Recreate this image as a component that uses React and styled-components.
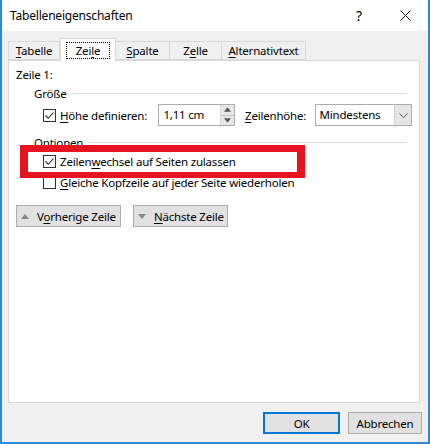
import React from 'react'
import styled, { createGlobalStyle } from 'styled-components'

const GlobalStyle = createGlobalStyle`
    html, body {
        margin: 0;
        padding: 0;
        background: #ffffff;
    }
    body {
        font-family: "Noto Sans", "Open Sans", sans-serif;
        font-size: 11.5px;
        letter-spacing: -0.2px;
        color: #000000;
    }
`
const Window = styled.div`
    width: 430px;
    height: 444px;
    box-sizing: border-box;
    border: 2px solid #2b8ad8;
    border-top: none;
    background: #f0f0f0;
    display: flex;
    flex-direction: column;
`
const TitleBar = styled.div`
    height: 31px;
    flex-shrink: 0;
    background: #ffffff;
    display: flex;
    align-items: center;
    padding-left: 8px;
`
const Caption = styled.div`
    flex: 1;
    font-size: 12px;
`
const CaptionButton = styled.div`
    width: 46px;
    height: 31px;
    display: flex;
    align-items: center;
    justify-content: center;
    font-size: 14px;
`
const Body = styled.div`
    display: flex;
    flex-direction: column;
    padding: 7px 8px 0 6px;
`
const Tabs = styled.div`
    display: flex;
    align-items: flex-end;
    height: 22px;
    position: relative;
    z-index: 1;
`
const Tab = styled.div`
    box-sizing: border-box;
    height: ${props => props.active ? '23px' : '19px'};
    width: ${props => props.width}px;
    margin-bottom: ${props => props.active ? '-1px' : '0'};
    background: ${props => props.active ? '#ffffff' : '#f0f0f0'};
    border: 1px solid #d9d9d9;
    border-bottom: ${props => props.active ? 'none' : '1px solid #d9d9d9'};
    border-left: ${props => props.first || props.active ? '1px solid #d9d9d9' : 'none'};
    display: flex;
    align-items: ${props => props.active ? 'flex-start' : 'center'};
    justify-content: center;
    padding-top: ${props => props.active ? '3px' : '0'};
    white-space: nowrap;
`
const FocusText = styled.span`
    border: 1px dotted #000000;
    padding: 0 9px;
    line-height: 15px;
    box-sizing: border-box;
    height: 17px;
`
const Key = styled.span`
    text-decoration: underline;
    text-underline-offset: 2px;
`
const Panel = styled.div`
    position: relative;
    box-sizing: border-box;
    height: 343px;
    background: #ffffff;
    border: 1px solid #d9d9d9;
    padding: 6px 7px;
`
const Line = styled.div`
    line-height: 16px;
    height: 16px;
`
const GroupHeader = styled.div`
    display: flex;
    align-items: center;
    height: 16px;
    margin: ${props => props.top}px 0 0 18px;
    &::after {
        content: '';
        flex: 1;
        height: 1px;
        background: #dcdcdc;
        margin: 1px 5px 0 6px;
    }
`
const FieldRow = styled.div`
    display: flex;
    align-items: center;
    height: 22px;
    margin: 3px 0 0 27px;
`
const CheckRow = styled.div`
    display: flex;
    align-items: center;
    height: 21px;
    margin: ${props => props.top || 0}px 0 0 27px;
`
const Box = styled.div`
    box-sizing: border-box;
    width: 13px;
    height: 13px;
    border: 1px solid #333333;
    background: #ffffff;
    flex-shrink: 0;
    display: flex;
    align-items: center;
    justify-content: center;
`
const CheckLabel = styled.span`
    margin-left: 4px;
    ${props => props.width ? `width: ${props.width}px;` : ''}
    white-space: nowrap;
`
const FieldLabel = styled.span`
    margin-left: 10px;
    width: 70px;
    white-space: nowrap;
`
const Spin = styled.div`
    box-sizing: border-box;
    width: 77px;
    height: 22px;
    border: 1px solid #abadb3;
    display: flex;
    align-items: stretch;
`
const SpinText = styled.div`
    flex: 1;
    padding-left: 4px;
    line-height: 20px;
`
const SpinButtons = styled.div`
    width: 13px;
    display: flex;
    flex-direction: column;
    border-left: 1px solid #d9d9d9;
    background: #e8e8e8;
`
const SpinHalf = styled.div`
    flex: 1;
    display: flex;
    align-items: center;
    justify-content: center;
    border-bottom: ${props => props.top ? '1px solid #c4c4c4' : 'none'};
`
const Select = styled.div`
    box-sizing: border-box;
    width: 98px;
    height: 22px;
    border: 1px solid #abadb3;
    display: flex;
    align-items: stretch;
`
const SelectText = styled.div`
    flex: 1;
    padding-left: 4px;
    line-height: 20px;
`
const DropButton = styled.div`
    width: 16px;
    background: #e5e5e5;
    border-left: 1px solid #d0d0d0;
    display: flex;
    align-items: center;
    justify-content: center;
`
const NavRow = styled.div`
    display: flex;
    gap: 12px;
    margin-top: 12px;
`
const Button = styled.div`
    box-sizing: border-box;
    height: 22px;
    width: ${props => props.width}px;
    background: #e1e1e1;
    border: ${props => props.primary ? '2px solid #0078d7' : '1px solid #adadad'};
    display: flex;
    align-items: center;
    justify-content: ${props => props.icon ? 'flex-start' : 'center'};
    padding-left: ${props => props.icon ? '4px' : '0'};
    gap: 8px;
    white-space: nowrap;
`
const Highlight = styled.div`
    position: absolute;
    left: 11px;
    top: 84px;
    width: 285px;
    height: 33px;
    box-sizing: border-box;
    border-style: solid;
    border-color: #e5141e;
    border-width: 7px 8px 6px 8px;
    pointer-events: none;
`
const Footer = styled.div`
    display: flex;
    justify-content: flex-end;
    gap: 8px;
    padding: 9px 6px 0 0;
`

const Check = ({ checked }) => (
    <Box>
        {checked && (
            <svg width="11" height="11" viewBox="0 0 11 11">
                <polyline points="1.5,5.5 4.2,8.3 9.6,2.5" fill="none" stroke="#222" strokeWidth="1.1" />
            </svg>
        )}
    </Box>
)

const Arrow = ({ up, size = 7, color = '#888' }) => (
    <svg width={size} height={Math.ceil(size / 2) + 1} viewBox="0 0 8 5">
        <polygon points={up ? '0,5 4,0 8,5' : '0,0 8,0 4,5'} fill={color} />
    </svg>
)

export default function App() {
    return (
        <>
            <GlobalStyle />
            <Window>
                <TitleBar>
                    <Caption>Tabelleneigenschaften</Caption>
                    <CaptionButton>?</CaptionButton>
                    <CaptionButton>
                        <svg width="11" height="11" viewBox="0 0 11 11">
                            <path d="M0.5 0.5 L10.5 10.5 M10.5 0.5 L0.5 10.5" stroke="#111" strokeWidth="1" />
                        </svg>
                    </CaptionButton>
                </TitleBar>
                <Body>
                    <Tabs>
                        <Tab first width={52}><span><Key>T</Key>abelle</span></Tab>
                        <Tab active width={56}><FocusText>Zei<Key>l</Key>e</FocusText></Tab>
                        <Tab width={54}><span><Key>S</Key>palte</span></Tab>
                        <Tab width={52}><span>Z<Key>e</Key>lle</span></Tab>
                        <Tab width={84}><span><Key>A</Key>lternativtext</span></Tab>
                    </Tabs>
                    <Panel>
                        <Line>Zeile 1:</Line>
                        <GroupHeader top={2}>Größe</GroupHeader>
                        <FieldRow>
                            <Check checked />
                            <CheckLabel width={99}><Key>H</Key>öhe definieren:</CheckLabel>
                            <Spin>
                                <SpinText>1,11 cm</SpinText>
                                <SpinButtons>
                                    <SpinHalf top><Arrow up size={7} color="#555" /></SpinHalf>
                                    <SpinHalf><Arrow size={7} color="#555" /></SpinHalf>
                                </SpinButtons>
                            </Spin>
                            <FieldLabel><Key>Z</Key>eilenhöhe:</FieldLabel>
                            <Select>
                                <SelectText>Mindestens</SelectText>
                                <DropButton>
                                    <svg width="9" height="5" viewBox="0 0 9 5">
                                        <polyline points="0.5,0.5 4.5,4.5 8.5,0.5" fill="none" stroke="#555" strokeWidth="1" />
                                    </svg>
                                </DropButton>
                            </Select>
                        </FieldRow>
                        <GroupHeader top={8}>Optionen</GroupHeader>
                        <CheckRow top={1}>
                            <Check checked />
                            <CheckLabel>Zeilen<Key>w</Key>echsel auf Seiten zulassen</CheckLabel>
                        </CheckRow>
                        <CheckRow>
                            <Check />
                            <CheckLabel><Key>G</Key>leiche Kopfzeile auf jeder Seite wiederholen</CheckLabel>
                        </CheckRow>
                        <NavRow>
                            <Button icon width={105}>
                                <Arrow up size={8} />
                                <span>V<Key>o</Key>rherige Zeile</span>
                            </Button>
                            <Button icon width={95}>
                                <Arrow size={8} />
                                <span><Key>N</Key>ächste Zeile</span>
                            </Button>
                        </NavRow>
                        <Highlight />
                    </Panel>
                </Body>
                <Footer>
                    <Button primary width={77}>OK</Button>
                    <Button width={74}>Abbrechen</Button>
                </Footer>
            </Window>
        </>
    )
}
